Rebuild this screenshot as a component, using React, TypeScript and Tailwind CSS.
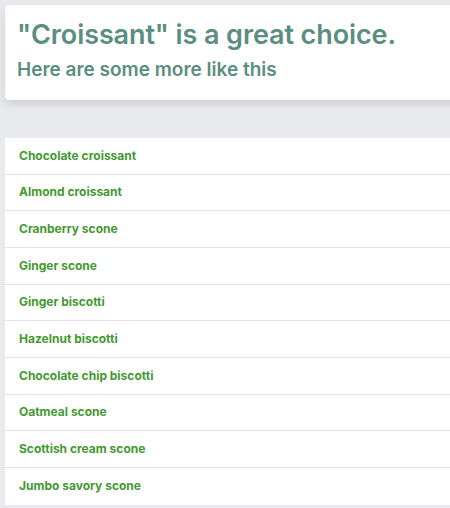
import React from "react";

const items = [
  "Chocolate croissant",
  "Almond croissant",
  "Cranberry scone",
  "Ginger scone",
  "Ginger biscotti",
  "Hazelnut biscotti",
  "Chocolate chip biscotti",
  "Oatmeal scone",
  "Scottish cream scone",
  "Jumbo savory scone",
];

export default function App() {
  return (
    <div
      className="w-[450px] h-[508px] overflow-hidden bg-[#e9eaee]"
      style={{ fontFamily: "Inter, 'Liberation Sans', sans-serif" }}
    >
      <div className="w-[470px] pl-[5px] pt-[5px]">
        <div className="h-[95px] rounded-[4px] bg-white px-[12px] pt-[13px] shadow-[0_4px_10px_rgba(0,0,0,0.12)]">
          <h1 className="text-[27px] leading-[34px] font-semibold tracking-[-0.1px] text-[#5b8e80]">
            "Croissant" is a great choice.
          </h1>
          <p className="mt-[6px] text-[19px] leading-[24px] font-semibold text-[#5b8e80]">
            Here are some more like this
          </p>
        </div>
        <div className="mt-[38px] bg-white">
          {items.map((it, i) => (
            <div
              key={it}
              className={
                "h-[36.67px] flex items-center pl-[14px] text-[12px] font-bold text-[#42992f] " +
                (i < items.length - 1 ? "border-b border-[#e2e3e6]" : "")
              }
            >
              {it}
            </div>
          ))}
        </div>
      </div>
    </div>
  );
}
